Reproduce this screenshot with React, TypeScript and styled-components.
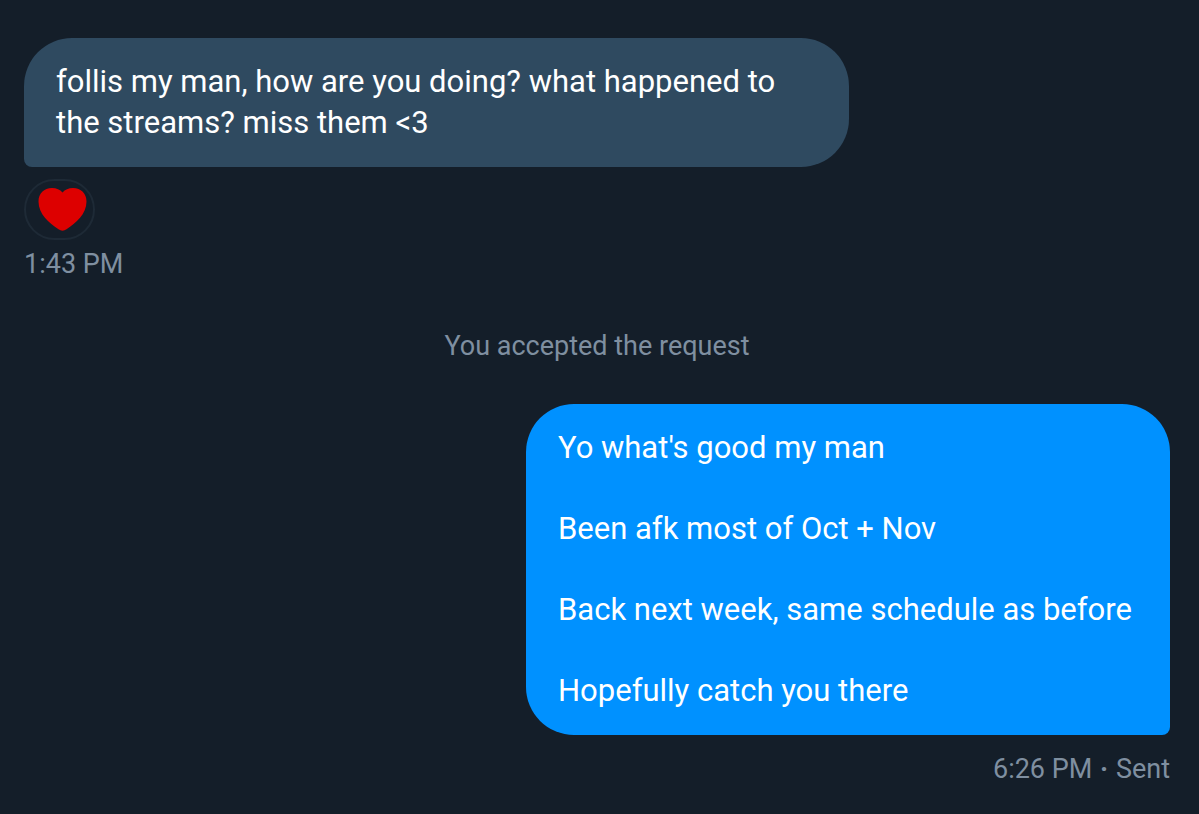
import React from "react";
import styled, { createGlobalStyle } from "styled-components";

const GlobalStyle = createGlobalStyle`
  * { box-sizing: border-box; }
  body {
    margin: 0;
    background: #141e29;
    font-family: Roboto, "Open Sans", sans-serif;
  }
`;

const Conversation = styled.main`
  display: flex;
  flex-direction: column;
  padding: 38px 29px 28px 24px;
`;

const Message = styled.article<{ $sent?: boolean }>`
  display: flex;
  flex-direction: column;
  align-items: ${(p) => (p.$sent ? "flex-end" : "flex-start")};
`;

const Bubble = styled.div<{ $sent?: boolean }>`
  display: flex;
  flex-direction: column;
  gap: 40px;
  min-width: ${(p) => (p.$sent ? "min(644px, 72%)" : "0")};
  max-width: 72%;
  padding: 23px 32px 24px;
  border-radius: ${(p) => (p.$sent ? "48px 48px 8px 48px" : "48px 48px 48px 8px")};
  background: ${(p) => (p.$sent ? "#0091ff" : "#2f4a60")};
  color: #ffffff;
  font-size: 31px;
  line-height: 41px;
`;

const Line = styled.p`
  margin: 0;
`;

const Reaction = styled.button`
  display: flex;
  align-items: center;
  justify-content: center;
  width: 71px;
  height: 61px;
  margin-top: 12px;
  padding: 0 0 0 6px;
  border: 2px solid #1e2a36;
  border-radius: 31px;
  background: transparent;
`;

const Meta = styled.footer<{ $sent?: boolean }>`
  margin-top: ${(p) => (p.$sent ? "18px" : "8px")};
  color: #7f8fa0;
  font-size: 27px;
  line-height: 32px;
`;

const Separator = styled.span`
  margin: 0 1px;
  font-weight: 700;
`;

const Notice = styled.p`
  margin: 50px 0 42px;
  color: #7f8fa0;
  font-size: 27px;
  line-height: 32px;
  text-align: center;
`;

const Heart = () => (
  <svg width="49" height="45" viewBox="0 0 49 45" aria-hidden="true">
    <path
      fill="#dd0000"
      d="M24.500 5.500C22 2.500 18.500 1 14 1C6 1 0.500 6.500 0.500 14.500C0.500 27 11 36 20.500 42.300Q24.500 45 28.500 42.300C38 36 48.500 27 48.500 14.500C48.500 6.500 43 1 35 1C30.500 1 27 2.500 24.500 5.500Z"
    />
  </svg>
);

const reply = [
  "Yo what's good my man",
  "Been afk most of Oct + Nov",
  "Back next week, same schedule as before",
  "Hopefully catch you there",
];

export default function App() {
  return (
    <>
      <GlobalStyle />
      <Conversation>
        <Message>
          <Bubble>
            <Line>follis my man, how are you doing? what happened to the streams? miss them &lt;3</Line>
          </Bubble>
          <Reaction type="button" aria-label="Heart reaction">
            <Heart />
          </Reaction>
          <Meta>1:43 PM</Meta>
        </Message>
        <Notice>You accepted the request</Notice>
        <Message $sent>
          <Bubble $sent>
            {reply.map((text) => (
              <Line key={text}>{text}</Line>
            ))}
          </Bubble>
          <Meta $sent>
            6:26 PM <Separator>·</Separator> Sent
          </Meta>
        </Message>
      </Conversation>
    </>
  );
}
